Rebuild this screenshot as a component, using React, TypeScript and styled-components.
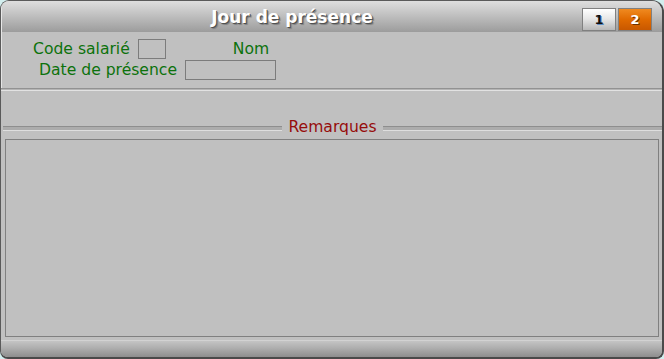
import React from "react";
import styled, { createGlobalStyle } from "styled-components";

const GlobalStyle = createGlobalStyle`
  html, body {
    margin: 0;
    padding: 0;
    background: #d2eeee;
  }
  * {
    box-sizing: border-box;
  }
`;

const Fenetre = styled.div`
  width: 664px;
  height: 359px;
  display: flex;
  flex-direction: column;
  background: #c0c0c0;
  border: 1px solid #5a5a5a;
  border-right: 2px solid #4a4a4a;
  border-bottom: 2px solid #4a4a4a;
  border-radius: 9px 12px 8px 8px;
  overflow: hidden;
  font-family: "DejaVu Sans", Verdana, sans-serif;
`;

const BarreTitre = styled.div`
  height: 31px;
  flex-shrink: 0;
  display: flex;
  align-items: center;
  background: linear-gradient(#dedede, #c4c4c4 40%, #9c9c9c);
  border-left: 1px solid #e8e8e8;
`;

const Titre = styled.div`
  width: 580px;
  text-align: center;
  color: #ffffff;
  font-weight: bold;
  font-size: 17px;
  text-shadow: 1px 1px 0 #505050, 2px 2px 1px #808080;
  padding-top: 1px;
`;

const Onglets = styled.div`
  display: flex;
  gap: 2px;
  padding-top: 6px;
`;

const Onglet = styled.div<{ $actif?: boolean }>`
  width: 34px;
  height: 23px;
  display: flex;
  align-items: center;
  justify-content: center;
  font-size: 13px;
  font-weight: bold;
  border: 1px solid #808080;
  color: ${(p) => (p.$actif ? "#ffffff" : "#101010")};
  text-shadow: ${(p) => (p.$actif ? "1px 1px 0 #703000" : "1px 1px 0 #5a8ac0")};
  background: ${(p) =>
    p.$actif
      ? "linear-gradient(#f08a20, #e06a00 50%, #c85800)"
      : "linear-gradient(#ffffff, #e8e8e8 45%, #b8b8b8)"};
`;

const Formulaire = styled.div`
  height: 56px;
  flex-shrink: 0;
  padding-top: 7px;
  border-left: 1px solid #e4e4e4;
  display: flex;
  flex-direction: column;
  gap: 1px;
`;

const Ligne = styled.div<{ $retrait: number }>`
  display: flex;
  align-items: center;
  height: 20px;
  padding-left: ${(p) => p.$retrait}px;
`;

const Libelle = styled.span<{ $avant?: number }>`
  color: #0c720c;
  font-size: 15.6px;
  margin-right: 8px;
  margin-left: ${(p) => p.$avant ?? 0}px;
`;

const Champ = styled.div<{ $largeur: number }>`
  width: ${(p) => p.$largeur}px;
  height: 20px;
  border: 1px solid #7c7c7c;
  background: #c0c0c0;
`;

const Separateur = styled.div`
  height: 3px;
  flex-shrink: 0;
  border-top: 1px solid #929292;
  border-bottom: 1px solid #e2e2e2;
  background: #b4b4b4;
`;

const Legende = styled.div`
  margin-top: 27px;
  display: flex;
  align-items: center;
  gap: 6px;
  padding: 0 0 0 2px;
  height: 18px;
  flex-shrink: 0;
  &::before,
  &::after {
    content: "";
    flex: 1;
    height: 3px;
    border-top: 1px solid #8e8e8e;
    border-bottom: 1px solid #dedede;
    background: #acacac;
    margin-top: 2px;
  }
`;

const TexteLegende = styled.span`
  color: #960c0c;
  font-size: 15.6px;
`;

const Remarques = styled.div`
  margin: 3px 3px 0 4px;
  height: 198px;
  flex-shrink: 0;
  border: 1px solid #808080;
  background: #c0c0c0;
`;

const BasPage = styled.div`
  margin-top: 3px;
  flex: 1;
  border-top: 1px solid #d2d2d2;
  background: linear-gradient(#c4c4c4, #b0b0b0 40%, #8e8e8e);
`;

export default function App() {
  return (
    <>
      <GlobalStyle />
      <Fenetre>
        <BarreTitre>
          <Titre>Jour de présence</Titre>
          <Onglets>
            <Onglet>1</Onglet>
            <Onglet $actif>2</Onglet>
          </Onglets>
        </BarreTitre>
        <Formulaire>
          <Ligne $retrait={31}>
            <Libelle>Code salarié</Libelle>
            <Champ $largeur={28} />
            <Libelle $avant={67}>Nom</Libelle>
          </Ligne>
          <Ligne $retrait={37}>
            <Libelle>Date de présence</Libelle>
            <Champ $largeur={91} />
          </Ligne>
        </Formulaire>
        <Separateur />
        <Legende>
          <TexteLegende>Remarques</TexteLegende>
        </Legende>
        <Remarques />
        <BasPage />
      </Fenetre>
    </>
  );
}
